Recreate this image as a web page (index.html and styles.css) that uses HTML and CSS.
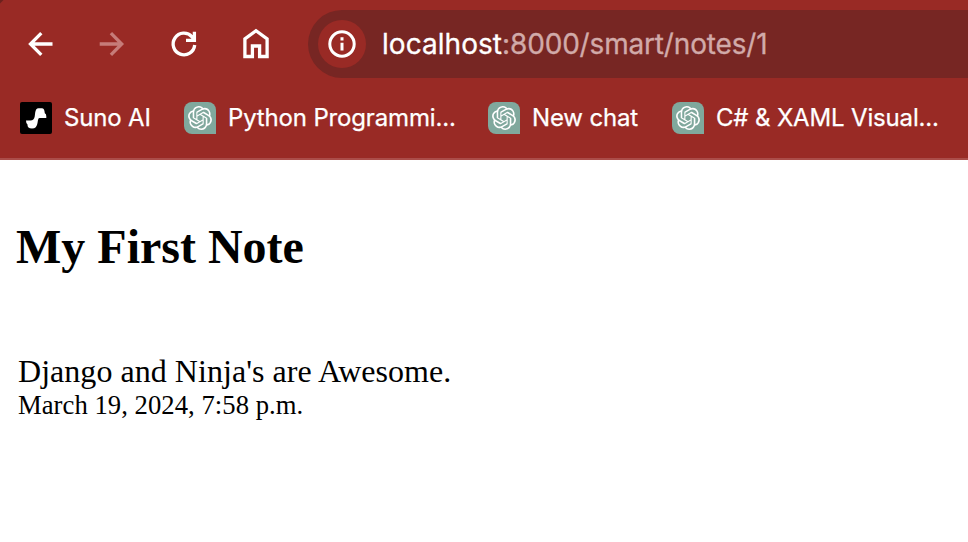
FILE: index.html
```html
<!DOCTYPE html>
<html lang="en">
<head>
<meta charset="utf-8">
<title>My First Note</title>
<link rel="stylesheet" href="styles.css">
</head>
<body>
<svg class="defs" width="0" height="0" aria-hidden="true">
  <symbol id="gpt" viewBox="0 0 24 24"><path fill="#fff" d="M22.2819 9.8211a5.9847 5.9847 0 0 0-.5157-4.9108 6.0462 6.0462 0 0 0-6.5098-2.9A6.0651 6.0651 0 0 0 4.9807 4.1818a5.9847 5.9847 0 0 0-3.9977 2.9 6.0462 6.0462 0 0 0 .7427 7.0966 5.98 5.98 0 0 0 .511 4.9107 6.051 6.051 0 0 0 6.5146 2.9001A5.9847 5.9847 0 0 0 13.2599 24a6.0557 6.0557 0 0 0 5.7718-4.2058 5.9894 5.9894 0 0 0 3.9977-2.9001 6.0557 6.0557 0 0 0-.7475-7.0729zm-9.022 12.6081a4.4755 4.4755 0 0 1-2.8764-1.0408l.1419-.0804 4.7783-2.7582a.7948.7948 0 0 0 .3927-.6813v-6.7369l2.02 1.1686a.071.071 0 0 1 .038.052v5.5826a4.504 4.504 0 0 1-4.4945 4.4944zm-9.6607-4.1254a4.4708 4.4708 0 0 1-.5346-3.0137l.142.0852 4.783 2.7582a.7712.7712 0 0 0 .7806 0l5.8428-3.3685v2.3324a.0804.0804 0 0 1-.0332.0615L9.74 19.9502a4.4992 4.4992 0 0 1-6.1408-1.6464zM2.3408 7.8956a4.485 4.485 0 0 1 2.3655-1.9728V11.6a.7664.7664 0 0 0 .3879.6765l5.8144 3.3543-2.0201 1.1685a.0757.0757 0 0 1-.071 0l-4.8303-2.7865A4.504 4.504 0 0 1 2.3408 7.872zm16.5963 3.8558L13.1038 8.364 15.1192 7.2a.0757.0757 0 0 1 .071 0l4.8303 2.7913a4.4944 4.4944 0 0 1-.6765 8.1042v-5.6772a.79.79 0 0 0-.407-.667zm2.0107-3.0231l-.142-.0852-4.7735-2.7818a.7759.7759 0 0 0-.7854 0L9.409 9.2297V6.8974a.0662.0662 0 0 1 .0284-.0615l4.8303-2.7866a4.4992 4.4992 0 0 1 6.6802 4.66zM8.3065 12.863l-2.02-1.1638a.0804.0804 0 0 1-.038-.0567V6.0742a4.4992 4.4992 0 0 1 7.3757-3.4537l-.142.0805L8.704 5.459a.7948.7948 0 0 0-.3927.6813zm1.0976-2.3654l2.602-1.4998 2.6069 1.4998v2.9994l-2.5974 1.4997-2.6067-1.4997Z"/></symbol>
</svg>
<header class="chrome">
  <div class="toolbar">
    <nav class="nav">
      <svg class="nav-icon" viewBox="0 0 32 32"><path d="M28.500 16H7M17.300 5.200L6.500 16l10.800 10.800"/></svg>
      <svg class="nav-icon disabled" viewBox="0 0 32 32"><path d="M3.700 16H25M14.900 5.200L25.700 16 14.900 26.800"/></svg>
      <svg class="nav-icon" viewBox="0 0 32 32"><path d="M26.700 17A10.800 10.800 0 1 1 24 8.800L26 11.500M26.400 3.700v8.700H18"/></svg>
      <svg class="nav-icon" viewBox="0 0 32 32"><path d="M4.900 28.500V10.800L16 2.700l11.100 8.100V28.500h-7.500V18h-7.200V28.500z"/></svg>
    </nav>
    <div class="address">
      <span class="site-info">
        <svg viewBox="0 0 28 28"><circle cx="14" cy="14" r="12.200"/><path d="M14 12.700v7.700M14 7.300v3.200"/></svg>
      </span>
      <span class="url"><span class="host">localhost</span><span class="path">:8000/smart/notes/1</span></span>
    </div>
  </div>
  <div class="bookmarks">
    <a class="bookmark suno"><svg class="favicon" viewBox="0 0 32 32"><rect width="32" height="32" rx="2"/><path fill="#fff" d="M18.500 6.200h3.500q2 0 2.500 3l.3 2q1.500.5 1.500 3V16h-6.800q-1.200 0-1.500 2l-.5 3q-.7 5.500-5.500 5.500t-4.500-4Q6 21.500 6 18.500h4.500q3.500 0 4.200-4l.5-4q.6-4.300 3.300-4.300z"/></svg><span class="label">Suno AI</span></a>
    <a class="bookmark python"><span class="favicon gpt"><svg><use href="#gpt"/></svg></span><span class="label">Python Programmi...</span></a>
    <a class="bookmark chat"><span class="favicon gpt"><svg><use href="#gpt"/></svg></span><span class="label">New chat</span></a>
    <a class="bookmark xaml"><span class="favicon gpt"><svg><use href="#gpt"/></svg></span><span class="label">C# &amp; XAML Visual...</span></a>
  </div>
</header>
<main class="page">
  <h1>My First Note</h1>
  <p class="note">Django and Ninja's are Awesome.</p>
  <p class="date">March 19, 2024, 7:58 p.m.</p>
</main>
</body>
</html>
```
FILE: styles.css
```css
* { box-sizing: border-box; }
body {
  margin: 0;
  height: 542px;
  overflow: hidden;
  background: #fff;
  color: #000;
  font-family: "Liberation Serif", serif;
}
.defs { display: block; }
.chrome {
  height: 160px;
  padding-top: 10px;
  background: linear-gradient(135deg, #6c211d 2px, #992a25 3px);
  border-bottom: 2px solid #ab4d49;
  color: #fff;
  font-family: Inter, sans-serif;
}
.toolbar { display: flex; height: 68px; }
.nav {
  display: flex;
  align-items: center;
  gap: 40px;
  width: 308px;
  padding-left: 24px;
}
.nav-icon {
  width: 32px;
  height: 32px;
  fill: none;
  stroke: #fff;
  stroke-width: 3.3;
}
.disabled { stroke: #c67c79; }
.address {
  display: flex;
  flex: 1;
  align-items: center;
  padding-left: 10px;
  background: #772623;
  border-radius: 34px 0 0 34px;
}
.site-info {
  display: flex;
  align-items: center;
  justify-content: center;
  width: 48px;
  height: 48px;
  margin-right: 16px;
  border-radius: 50%;
  background: #992a25;
}
.site-info svg {
  width: 28px;
  height: 28px;
  fill: none;
  stroke: #fff;
  stroke-width: 3;
}
.url {
  font-size: 28px;
  line-height: 34px;
  white-space: nowrap;
  -webkit-text-stroke: 0.3px;
}
.host { letter-spacing: 0.05px; }
.path { color: #d1aaa9; letter-spacing: -0.17px; }
.bookmarks {
  display: flex;
  height: 80px;
  align-items: center;
  padding-left: 20px;
}
.bookmark {
  display: flex;
  flex: none;
  align-items: center;
  gap: 12px;
}
.suno { width: 164px; }
.python { width: 304px; }
.chat { width: 184px; }
.favicon { width: 32px; height: 32px; flex: none; }
.gpt {
  display: flex;
  align-items: center;
  justify-content: center;
  border-radius: 8px 8px 0 8px;
  background: #80a89d;
}
.gpt svg { width: 24px; height: 24px; }
.label {
  font-size: 24px;
  line-height: 32px;
  letter-spacing: -0.16px;
  white-space: nowrap;
  -webkit-text-stroke: 0.25px;
}
.page { padding: 59px 16px 0; }
h1 {
  margin: 0 0 78px;
  font-size: 48px;
  line-height: 56px;
}
p { margin: 0 0 0 2px; }
.note { font-size: 32px; line-height: 37px; letter-spacing: 0.04px; }
.date { font-size: 26.670px; line-height: 30px; letter-spacing: 0.04px; }
```
